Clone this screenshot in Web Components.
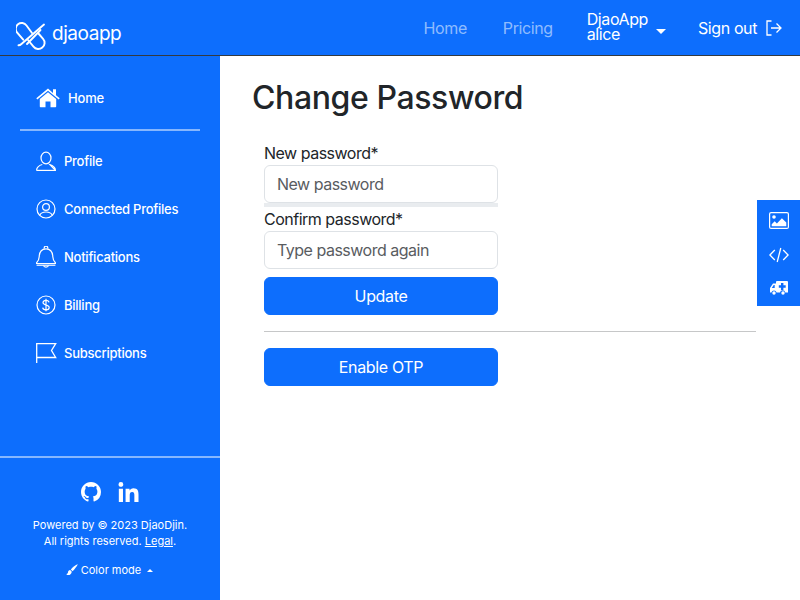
<!DOCTYPE html>
<html lang="en"><head><meta charset="utf-8"><title>Change Password</title>
<style>
html,body{margin:0;padding:0;height:100%;background:#fff}
body{font-family:Inter,"Liberation Sans",sans-serif;color:#212529;overflow:hidden}
</style></head>
<body>
<app-shell>
  <top-bar slot="top"></top-bar>
  <side-bar slot="side"></side-bar>
  <change-password slot="main"></change-password>
  <side-tools slot="tools"></side-tools>
</app-shell>
<script>
const I={
 logo:'<svg width="30" height="30" viewBox="16 21 30 30" fill="none" stroke="#fff" stroke-width="1.900" stroke-linecap="round"><path d="M32 33 26.500 25.500a6 6 0 0 0-8.500-1.300 6 6 0 0 0-.8 8.500l6 7"/><path d="M28 40l5.500 6.700a6 6 0 0 0 8.800 .8 6 6 0 0 0 .8-8.700L38 33"/><path d="M44 24.500 22 43.500c-1.500 1.300-2 2-3.500 1.800"/><path d="M40.500 30 27 44"/></svg>',
 home:'<svg width="24" height="20" viewBox="0 0 24 20" fill="#fff"><path d="M12 4.200 3.800 11v7.200c0 .6.400 1 1 1h4.700v-5.600h5v5.600h4.700c.6 0 1-.4 1-1V11z"/><path d="M12 .6.300 10.300l1 1.300L12 2.800l10.700 8.800 1-1.300-3.700-3V1.300h-3v3.700z"/></svg>',
 person:'<svg width="20" height="20" viewBox="0 0 20 20" fill="none" stroke="#fff" stroke-width="1.200"><ellipse cx="10" cy="7" rx="5" ry="5.800"/><path d="M.6 19.400c0-.6 0-2 1-3.100 1.200-1.300 3-2.500 4.700-2.800M13.700 13.500c1.700.3 3.500 1.500 4.700 2.800 1 1.100 1 2.500 1 3.100z"/><path d="M.6 19.400h18.800"/></svg>',
 circle:'<svg width="20" height="20" viewBox="0 0 20 20" fill="none" stroke="#fff" stroke-width="1.200"><circle cx="10" cy="10" r="9"/><circle cx="10" cy="8" r="3.400"/><path d="M3.800 16.200c.8-2 3-3.200 6.200-3.200s5.400 1.200 6.200 3.200"/></svg>',
 bell:'<svg width="20" height="22" viewBox="0 0 20 22" fill="none" stroke="#fff" stroke-width="1.200"><path d="M8.200 2.800V2a1.800 1.800 0 0 1 3.600 0v.8"/><path d="M.6 17.500v-.8c1.600-1.400 2.400-2.600 2.600-6C3.400 6 5 2.800 10 2.800s6.600 3.200 6.800 7.900c.2 3.400 1 4.600 2.600 6v.8z"/><path d="M.6 19.200h18.800"/><path d="M7.500 19.500c.2 1 1 1.600 2.500 1.600s2.300-.6 2.500-1.600"/></svg>',
 billing:'<svg width="20" height="20" viewBox="0 0 20 20" fill="none" stroke="#fff" stroke-width="1.200"><circle cx="10" cy="10" r="9"/><path d="M13 7.300c-.2-1.300-1.300-2-3-2-1.900 0-3 .9-3 2.300 0 3.200 6.200 1.700 6.200 4.900 0 1.400-1.300 2.300-3.200 2.300-1.900 0-3.100-.8-3.300-2.200M10 3.800v12.400"/></svg>',
 flag:'<svg width="21" height="20" viewBox="0 0 21 20" fill="none" stroke="#fff" stroke-width="1.300"><path d="M.7 20V.7h19l-4.200 6.800 4.200 7H.7"/></svg>',
 signout:'<svg width="16" height="16" viewBox="0 0 16 16" fill="none" stroke="#fff" stroke-width="1.300"><path d="M5.500 1H1v14h4.500"/><path d="M5 8h10M10.500 3.500 15 8l-4.500 4.500"/></svg>',
 github:'<svg width="20" height="20" viewBox="0 0 16 16" fill="#fff"><path d="M8 0C3.580 0 0 3.580 0 8c0 3.540 2.290 6.530 5.470 7.590.4.070.55-.17.55-.38 0-.19-.01-.82-.01-1.490-2.010.37-2.530-.49-2.690-.94-.09-.23-.48-.94-.82-1.130-.28-.15-.68-.52-.01-.53.630-.01 1.080.58 1.230.82.720 1.210 1.870.87 2.330.66.070-.52.28-.87.51-1.070-1.780-.2-3.640-.89-3.640-3.950 0-.87.31-1.590.82-2.150-.08-.2-.36-1.020.08-2.120 0 0 .67-.21 2.200.82.64-.18 1.320-.27 2-.27.68 0 1.360.09 2 .27 1.530-1.040 2.200-.82 2.200-.82.44 1.100.16 1.920.08 2.120.51.56.82 1.270.82 2.150 0 3.070-1.870 3.750-3.650 3.950.29.25.54.73.54 1.480 0 1.070-.01 1.930-.01 2.200 0 .21.15.46.55.38A8.012 8.012 0 0 0 16 8c0-4.420-3.580-8-8-8z"/></svg>',
 linkedin:'<svg width="21" height="20" viewBox="0 0 448 448" fill="#fff"><path d="M100.280 448H7.400V148.900h92.880zM53.790 108.100C24.090 108.100 0 83.500 0 53.800a53.790 53.790 0 0 1 107.580 0c0 29.700-24.100 54.300-53.790 54.300zM447.900 448h-92.680V302.400c0-34.700-.7-79.200-48.290-79.200-48.290 0-55.690 37.700-55.690 76.700V448h-92.780V148.900h89.080v40.800h1.300c12.400-23.500 42.690-48.300 87.880-48.300 94 0 111.280 61.900 111.280 142.300V448z"/></svg>',
 brush:'<svg width="12" height="12" viewBox="0 0 12 12" fill="#fff"><path d="M11.500.3C9.800 1 6.500 3.400 4.800 5.500l1.700 1.700C8.500 5.400 11 2.200 11.700.5z"/><path d="M4.200 6.100c-1.500 0-2 1-2.200 2.200C1.900 9.300 1.300 9.900.3 10.200c1 1.300 4.900 1.700 5.500-2.400z"/></svg>',
 image:'<svg width="20" height="17" viewBox="0 0 20 17"><rect x=".6" y=".6" width="18.800" height="15.800" rx="1.500" fill="none" stroke="#fff" stroke-width="1.200"/><circle cx="5" cy="5" r="1.800" fill="#fff"/><path d="M2.700 14.300V12.200l3-3 2.200 2.200 5-5.200 4.400 4.400v3.700z" fill="#fff"/></svg>',
 code:'<svg width="20" height="16" viewBox="0 0 20 16" fill="none" stroke="#fff" stroke-width="1.300"><path d="M5.800 3 .9 8l4.900 5M14.200 3l4.900 5-4.900 5M11.800 1 8.200 15"/></svg>',
 amb:'<svg width="18" height="14" viewBox="0 0 18 14" fill="#fff"><path fill-rule="evenodd" d="M6 1a1 1 0 0 1 1-1h10a1 1 0 0 1 1 1v10.500h-2.700a2.700 2.700 0 0 0-5.300 0H6.600a2.700 2.700 0 0 0-5.200 0H0V7l3-4.500h3zM11 2v2.300H8.800v2.400H11V9h2.400V6.700h2.300V4.300h-2.300V2zM4.700 4H3.700L1.800 7h2.900z"/><circle cx="4" cy="12" r="1.700"/><circle cx="13" cy="12" r="1.700"/></svg>'
};
function def(name,html,init){customElements.define(name,class extends HTMLElement{
  constructor(){super();this.attachShadow({mode:'open'}).innerHTML=html;}
  connectedCallback(){init&&init.call(this)}
});}
def('app-shell',`<style>
:host{display:grid;grid-template-columns:220px 1fr;grid-template-rows:56px 544px;width:800px;height:600px;position:relative;overflow:hidden}
.top{grid-column:1/3;display:block}.side{display:block}.main{display:block;min-width:0}
</style>
<div class="top"><slot name="top"></slot></div>
<div class="side"><slot name="side"></slot></div>
<div class="main"><slot name="main"></slot></div>
<slot name="tools"></slot>`);
def('top-bar',`<style>
:host{display:flex;align-items:center;height:56px;box-sizing:border-box;background:#0d6efd;border-bottom:1px solid #343a40;color:#fff;padding:0 18px 0 16px}
.brand{display:flex;align-items:flex-start;align-self:flex-start;margin-top:21px;gap:6px;font-size:19px;line-height:24px;font-weight:400;letter-spacing:-.45px}
.brand span:last-child{margin-top:1px}
.logo{display:flex}
nav{margin-left:auto;display:flex;align-items:center;font-size:16px;letter-spacing:-.4px}
.link{color:rgba(255,255,255,.55);line-height:24px}
.home{margin-right:36px}.pricing{margin-right:34px}
.who{display:flex;align-items:center;line-height:15px;margin-right:32px;margin-bottom:2px}
.names{display:flex;flex-direction:column}
.caret{width:0;height:0;border:5px solid transparent;border-top-color:#fff;border-bottom:0;margin:10px 0 0 8px;align-self:center}
.out{display:flex;align-items:center;gap:9px;line-height:24px}
svg{display:block}
</style>
<div class="brand"><span class="logo">${I.logo}</span><span>djaoapp</span></div>
<nav><span class="link home">Home</span><span class="link pricing">Pricing</span>
<span class="who"><span class="names"><span>DjaoApp</span><span>alice</span></span><span class="caret"></span></span>
<span class="out"><span>Sign out</span>${I.signout}</span></nav>`);
def('side-item',`<style>
:host{display:flex;align-items:center;height:48px;padding-left:36px;color:#fff;font-size:13px;line-height:20px;font-weight:500;letter-spacing:-.25px}
.icon{display:flex;width:28px;flex:none;align-items:center}
</style><span class="icon"><slot name="icon"></slot></span><slot></slot>`);
def('side-bar',`<style>
:host{display:flex;flex-direction:column;height:544px;background:#0d6efd;color:#fff;box-sizing:border-box;padding-top:18px}
.h{padding-left:36px;display:flex;align-items:center;height:48px;font-size:13px;font-weight:500;gap:8px;box-sizing:border-box;letter-spacing:-.2px}
.d1{height:2px;background:rgba(255,255,255,.5);margin:7px 20px 6px}
svg{display:block}
.list{flex:1}
footer{border-top:2px solid rgba(255,255,255,.5);height:144px;flex:none;box-sizing:border-box;display:flex;flex-direction:column;align-items:center;font-size:11px;line-height:16px;padding-top:24px}
.soc{display:flex;gap:17px;margin-bottom:15px}
.legal{text-decoration:underline}
p{margin:0;text-align:center}
.mode{display:flex;align-items:center;gap:3px;margin-top:13px;margin-left:-1px}
.up{width:0;height:0;border:3px solid transparent;border-bottom-color:#fff;border-top:0;margin-left:3px}
</style>
<div class="h">${I.home}<span>Home</span></div>
<div class="d1"></div>
<div class="list">
<side-item><span slot="icon">${I.person}</span>Profile</side-item>
<side-item><span slot="icon">${I.circle}</span>Connected Profiles</side-item>
<side-item><span slot="icon">${I.bell}</span>Notifications</side-item>
<side-item><span slot="icon">${I.billing}</span>Billing</side-item>
<side-item><span slot="icon">${I.flag}</span>Subscriptions</side-item>
</div>
<footer><div class="soc">${I.github}${I.linkedin}</div>
<p>Powered by © 2023 DjaoDjin.<br>All rights reserved. <span class="legal">Legal</span>.</p>
<div class="mode">${I.brush}<span>Color mode</span><span class="up"></span></div></footer>`);
def('text-field',`<style>
:host{display:block}
label{display:block;font-size:16px;line-height:24px;color:#212529;letter-spacing:-.5px}
input{display:block;box-sizing:border-box;width:100%;height:38px;border:1px solid #dee2e6;border-radius:6px;padding:6px 12px;font:400 16px/24px Inter,"Liberation Sans",sans-serif;letter-spacing:-.5px;color:#212529;background:#fff;outline:0}
input::placeholder{color:#595c5f;opacity:1}
.meter{height:4px;background:#e9ecef;display:none}
:host([meter]) .meter{display:block}
</style><label id="l"></label><input id="i" type="password"><div class="meter"></div>`,function(){
 this.shadowRoot.getElementById('l').textContent=this.getAttribute('label');
 this.shadowRoot.getElementById('i').placeholder=this.getAttribute('placeholder');
});
def('app-button',`<style>
:host{display:block}
button{display:block;width:100%;height:38px;border:1px solid #0d6efd;border-radius:6px;background:#0d6efd;color:#fff;font:400 16px/24px Inter,"Liberation Sans",sans-serif;letter-spacing:-.35px;padding:6px 12px}
</style><button><slot></slot></button>`);
def('change-password',`<style>
:host{display:block;padding:0 44px 0 32px;color:#212529}
h1{margin:0;padding-top:19px;font-size:32px;line-height:45px;font-weight:500;color:#212529;letter-spacing:-.4px}
.body{padding:21px 0 0 12px}
.form{width:234px;display:flex;flex-direction:column}
app-button.u{margin-top:8px}
hr{border:0;border-top:1px solid #c6c7c8;margin:16px 0}
</style><h1>Change Password</h1>
<div class="body"><div class="form">
<text-field meter label="New password*" placeholder="New password"></text-field>
<text-field label="Confirm password*" placeholder="Type password again"></text-field>
<app-button class="u">Update</app-button></div>
<hr>
<div class="form"><app-button>Enable OTP</app-button></div></div>`);
def('side-tools',`<style>
:host{position:absolute;right:0;top:200px;width:43px;height:106px;background:#0d6efd;display:block;padding-top:12px;box-sizing:border-box;overflow:hidden}
span{display:flex;height:35px;justify-content:center}span:last-child{margin-top:-1px}svg{display:block}
</style><span>${I.image}</span><span>${I.code}</span><span>${I.amb}</span>`);
</script>
</body></html>
